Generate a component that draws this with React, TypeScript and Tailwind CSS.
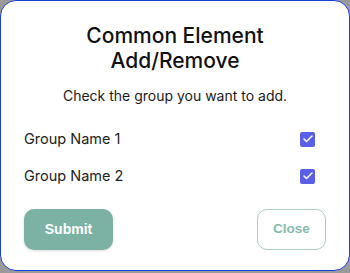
import { Check } from "lucide-react";

const GROUPS = ["Group Name 1", "Group Name 2"];

export default function App() {
  return (
    <div className="w-[350px] h-[273px] bg-[#9a9a9a]">
      <div
        className="w-[350px] h-[271px] bg-white rounded-[16px] border-[1.5px] border-[#1a3fd6] flex flex-col"
        style={{ fontFamily: "Inter, 'Noto Sans', sans-serif" }}
      >
        <h1 className="mt-[22px] text-center text-[21px] leading-[25px] font-medium text-[#111]">
          Common Element
          <br />
          Add/Remove
        </h1>
        <p className="mt-[13px] text-center text-[14px] leading-[20px] text-[#1a1a1a]">
          Check the group you want to add.
        </p>

        <div className="mt-[23px] flex flex-col gap-[17px] pl-[23px] pr-[34px]">
          {GROUPS.map((g) => (
            <label key={g} className="flex items-center justify-between h-[20px]">
              <span className="text-[14.5px] text-[#222]">{g}</span>
              <span className="w-[15px] h-[15px] rounded-[2px] bg-[#5b5ee6] flex items-center justify-center">
                <Check size={12} strokeWidth={3} className="text-white" />
              </span>
            </label>
          ))}
        </div>

        <div
          className="mt-[23px] flex items-center justify-between pl-[23px] pr-[23px]"
          style={{ fontFamily: "'Liberation Sans', Arial, sans-serif" }}
        >
          <button className="w-[89px] h-[41px] rounded-[10px] bg-[#7bb2a3] text-white text-[14px] font-bold shadow-[0_1px_3px_rgba(0,0,0,0.15)]">
            Submit
          </button>
          <button className="w-[69px] h-[41px] rounded-[10px] border border-[#a9cfc4] bg-white text-[#86bbad] text-[13.5px] font-bold">
            Close
          </button>
        </div>
      </div>
    </div>
  );
}
